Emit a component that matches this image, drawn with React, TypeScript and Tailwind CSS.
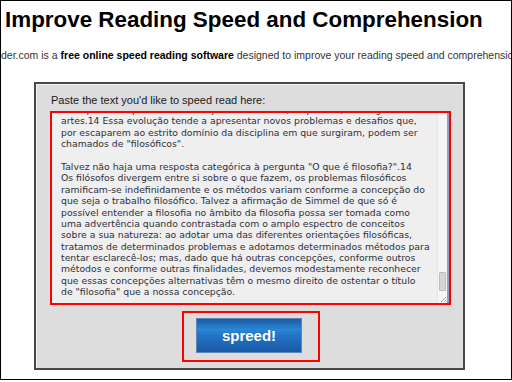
import * as React from "react";

const lines = [
  "acompanha os passos e a evolução das ciências, da política, da religião e das",
  "artes.14 Essa evolução tende a apresentar novos problemas e desafios que,",
  "por escaparem ao estrito domínio da disciplina em que surgiram, podem ser",
  "chamados de \"filosóficos\".",
  "",
  "Talvez não haja uma resposta categórica à pergunta \"O que é filosofia?\".14",
  "Os filósofos divergem entre si sobre o que fazem, os problemas filosóficos",
  "ramificam-se indefinidamente e os métodos variam conforme a concepção do",
  "que seja o trabalho filosófico. Talvez a afirmação de Simmel de que só é",
  "possível entender a filosofia no âmbito da filosofia possa ser tomada como",
  "uma advertência quando contrastada com o amplo espectro de conceitos",
  "sobre a sua natureza: ao adotar uma das diferentes orientações filosóficas,",
  "tratamos de determinados problemas e adotamos determinados métodos para",
  "tentar esclarecê-los; mas, dado que há outras concepções, conforme outros",
  "métodos e conforme outras finalidades, devemos modestamente reconhecer",
  "que essas concepções alternativas têm o mesmo direito de ostentar o título",
  "de \"filosofia\" que a nossa concepção.",
];

export default function App() {
  return (
    <div className="w-[512px] h-[382px] bg-white overflow-hidden">
      <div className="w-[512px] h-[380px] border border-black overflow-hidden font-['Liberation_Sans',Arial,sans-serif]">
        <h1 className="ml-[4px] mt-[6px] text-[22.4px] leading-[26px] font-bold text-black whitespace-nowrap">
          Improve Reading Speed and Comprehension
        </h1>

        <p className="mt-[16px] ml-[-28px] text-[10.5px] leading-[13px] text-[#333] whitespace-nowrap">
          Spreeder.com is a <b className="text-black">free online speed reading software</b> designed to improve your reading speed and comprehension.
        </p>

        <div className="ml-[33px] mt-[20px] w-[431px] h-[288px] border-2 border-[#4a4843] bg-[#dddddd] pt-[10px] shadow-[inset_1px_1px_0_#f4f4f4]">
          <div className="ml-[15px] text-[11px] leading-[13px] text-[#1a1a1a]">
            Paste the text you'd like to speed read here:
          </div>

          <div className="ml-[14px] mt-[4px] w-[401px] h-[194px] border-2 border-[#ff0000] flex">
            <div className="flex-1 bg-[#efefef] overflow-hidden pl-[9px]">
              <div className="mt-[-9px] font-['DejaVu_Sans',Verdana,sans-serif] text-[9.3px] leading-[11.4px] text-[#2e2e3a] whitespace-pre">
                {lines.map((l, i) => (
                  <div key={i} className="h-[11.4px]">{l}</div>
                ))}
              </div>
            </div>
            <div className="w-[10px] bg-[#f6f6f6] border-l border-[#e6e6e6] relative">
              <div className="absolute left-[1px] top-[159px] w-[7px] h-[19px] bg-[#d6d6d6] border border-[#bcbcbc] rounded-[1px]" />
              <svg className="absolute right-0 bottom-0" width="8" height="8" viewBox="0 0 8 8">
                <path d="M7 2 L2 7 M7 5 L5 7" stroke="#a8a8a8" strokeWidth="1" />
              </svg>
            </div>
            <div className="w-[2px] bg-[#8aa4c4]" />
          </div>

          <div className="ml-[146px] mt-[6px] w-[138px] h-[51px] border-2 border-[#ff0000] pl-[12px] pt-[5px]">
            <button className="w-[106px] h-[35px] border border-[#5f86b8] bg-[linear-gradient(180deg,#1c59a2_0%,#2a86d6_32%,#2274c6_50%,#1b5aa5_100%)] text-white font-bold text-[15px] leading-none">
              spreed!
            </button>
          </div>
        </div>
      </div>
    </div>
  );
}
